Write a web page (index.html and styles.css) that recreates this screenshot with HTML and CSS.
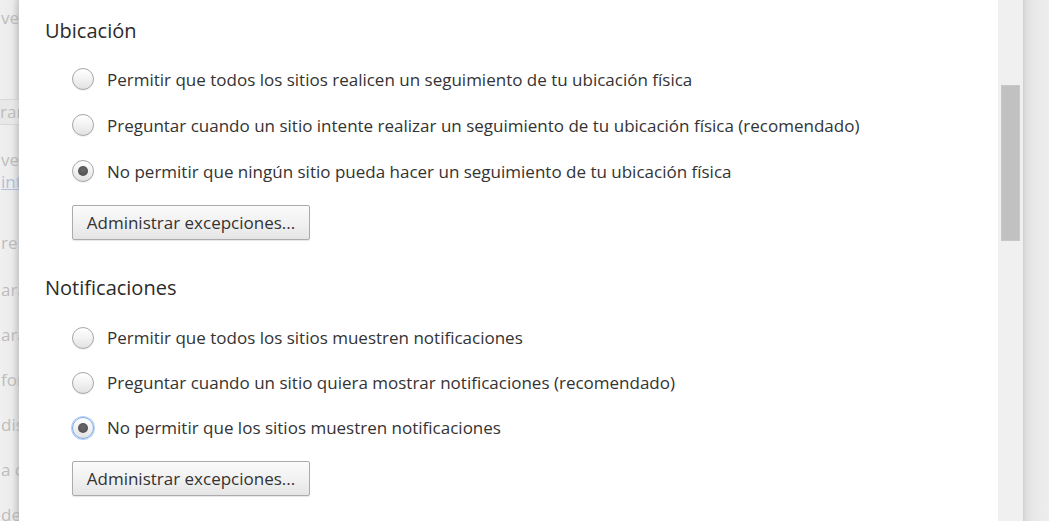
FILE: index.html
```html
<!DOCTYPE html>
<html lang="es">
<head>
<meta charset="utf-8">
<title>Configuración de contenido</title>
<link rel="stylesheet" href="styles.css">
</head>
<body>
<div class="page">
  <div class="backdrop-left">
    <div class="bg-line l1">ve</div>
    <div class="bg-field">rar</div>
    <div class="bg-line l2">vel</div>
    <div class="bg-line link">int</div>
    <div class="bg-line l3">re</div>
    <div class="bg-line l5">ara</div>
    <div class="bg-line l5">ara</div>
    <div class="bg-line l5">for</div>
    <div class="bg-line l5">dis</div>
    <div class="bg-line l5">a c</div>
    <div class="bg-line l5">de</div>
  </div>
  <div class="dialog">
    <section class="group">
      <h3 class="group-title">Ubicación</h3>
      <div class="radio-row"><span class="radio"></span><span class="label">Permitir que todos los sitios realicen un seguimiento de tu ubicación física</span></div>
      <div class="radio-row"><span class="radio"></span><span class="label">Preguntar cuando un sitio intente realizar un seguimiento de tu ubicación física (recomendado)</span></div>
      <div class="radio-row"><span class="radio checked"></span><span class="label">No permitir que ningún sitio pueda hacer un seguimiento de tu ubicación física</span></div>
      <button class="btn">Administrar excepciones...</button>
    </section>
    <section class="group second">
      <h3 class="group-title">Notificaciones</h3>
      <div class="radio-row"><span class="radio"></span><span class="label">Permitir que todos los sitios muestren notificaciones</span></div>
      <div class="radio-row"><span class="radio"></span><span class="label">Preguntar cuando un sitio quiera mostrar notificaciones (recomendado)</span></div>
      <div class="radio-row"><span class="radio checked focused"></span><span class="label">No permitir que los sitios muestren notificaciones</span></div>
      <button class="btn">Administrar excepciones...</button>
    </section>
  </div>
  <div class="scrollbar"><div class="thumb"></div></div>
  <div class="backdrop-right"></div>
</div>
</body>
</html>
```
FILE: styles.css
```css
html, body {
  margin: 0;
  padding: 0;
}
body {
  width: 1049px;
  height: 521px;
  overflow: hidden;
  background: #ececec;
  font-family: "Open Sans", "Noto Sans", sans-serif;
  color: #333;
}
.page {
  display: flex;
  height: 521px;
}
.backdrop-left {
  width: 19px;
  flex: none;
  overflow: hidden;
  background: linear-gradient(to right, #f0f0f0 0, #ebebeb 12px, #dcdcdc 19px);
  color: #bdbdbd;
  font-size: 17px;
  white-space: nowrap;
  padding-top: 7px;
}
.bg-line {
  height: 22px;
  line-height: 22px;
  padding-left: 1px;
}
.bg-line.l1 { margin-bottom: 70px; }
.bg-field {
  height: 24px;
  line-height: 24px;
  border-top: 1px solid #d9d9d9;
  border-bottom: 1px solid #d9d9d9;
  background: #e8e8e8;
  margin-bottom: 24px;
}
.bg-line.link {
  color: #b0bedc;
  text-decoration: underline;
  margin-bottom: 39px;
}
.bg-line.l3 { margin-bottom: 25px; }
.bg-line.l5 { margin-bottom: 23px; }
.dialog {
  flex: 1;
  background: #fff;
  padding: 19px 0 0 26px;
  box-shadow: -2px 0 6px rgba(0, 0, 0, 0.12);
  position: relative;
  z-index: 1;
}
.group {
  display: flex;
  flex-direction: column;
  align-items: flex-start;
}
.group.second {
  margin-top: 36px;
}
.group-title {
  margin: 0 0 13px 0;
  font-size: 20px;
  line-height: 24px;
  font-weight: normal;
  color: #2b2b2b;
}
.radio-row {
  height: 46px;
  display: flex;
  align-items: center;
  margin-left: 27px;
}
.second .radio-row {
  height: 45px;
}
.second .group-title {
  margin-bottom: 15px;
}
.radio {
  width: 20px;
  height: 20px;
  border-radius: 50%;
  border: 1px solid #a6a6a6;
  background: linear-gradient(to bottom, #ffffff 0%, #f2f2f2 50%, #e2e2e2 100%);
  box-shadow: inset 0 1px 1px rgba(255, 255, 255, 0.9), 0 1px 1px rgba(0, 0, 0, 0.06);
  display: flex;
  align-items: center;
  justify-content: center;
  flex: none;
}
.radio.checked::after {
  content: "";
  width: 10px;
  height: 10px;
  border-radius: 50%;
  background: radial-gradient(circle at 50% 40%, #6a6a6a, #4a4a4a);
}
.radio.focused {
  border-color: #7aa7ec;
  box-shadow: 0 0 0 1px #b9d2f6;
}
.label {
  margin-left: 13px;
  font-size: 17px;
  color: #333;
  white-space: nowrap;
}
.btn {
  margin: 11px 0 0 27px;
  width: 238px;
  height: 35px;
  border: 1px solid #ababab;
  border-radius: 2px;
  background: linear-gradient(to bottom, #fbfbfb 0%, #efefef 60%, #e5e5e5 100%);
  box-shadow: 0 1px 1px rgba(0, 0, 0, 0.1);
  font-family: "Open Sans", "Noto Sans", sans-serif;
  font-size: 17px;
  color: #333;
  padding: 0;
}
.scrollbar {
  width: 25px;
  flex: none;
  background: #f0f0f0;
  padding: 85px 3px 0 3px;
  box-sizing: border-box;
  position: relative;
  z-index: 1;
}
.thumb {
  height: 156px;
  background: #c1c1c1;
  border: 1px solid #c8c8c8;
  box-sizing: border-box;
}
.backdrop-right {
  width: 26px;
  flex: none;
  background: linear-gradient(to right, #cfcfcf 0, #dedede 3px, #e8e8e8 10px, #eeeeee 26px);
}
```
